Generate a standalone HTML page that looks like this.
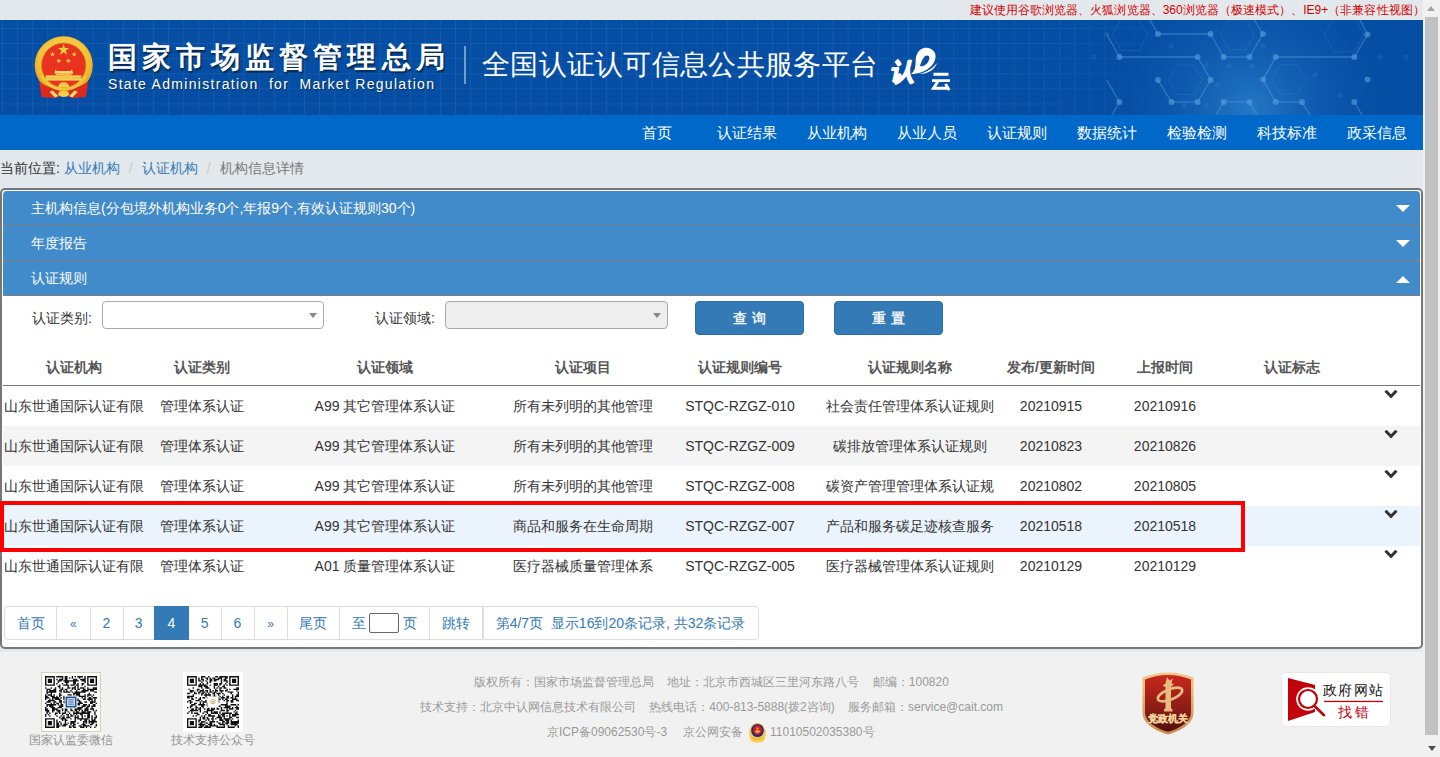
<!DOCTYPE html>
<html><head><meta charset="utf-8">
<style>
*{box-sizing:border-box}
html,body{margin:0;padding:0}
body{width:1440px;height:757px;overflow:hidden;position:relative;background:#e3e8ec;font-family:"Liberation Sans",sans-serif;font-size:14px;color:#333}
.a{position:absolute;white-space:nowrap}
#topbar{left:0;top:0;width:1423px;height:20px;background:#e3e8ec}
#tip{left:970px;top:0;font-size:12px;line-height:20px;color:#d40000;letter-spacing:.04px}
#banner{left:0;top:20px;width:1423px;height:95px;background:#064ea3;overflow:hidden}
#nav{left:0;top:115px;width:1423px;height:35px;background:#0068c9}
#nav .i{position:absolute;top:0;width:90px;text-align:center;color:#fff;font-size:15px;line-height:35px}
#sb{left:1423px;top:0;width:17px;height:757px;background:#f1f1f1}
#thumb{left:1425px;top:17px;width:13px;height:718px;background:#c1c1c1}
#crumb{left:0;top:158px;font-size:14px;line-height:20px;color:#333}
#crumb .l{color:#337ab7}
#crumb .s{color:#ccc;padding:0 9px}
#crumb .c{color:#777}
#panel{left:0;top:188px;width:1423px;height:461px;border:2px solid #777;border-radius:5px;background:#fff}
.acc{position:absolute;left:3px;width:1417px;height:35px;background:#428bca;border-bottom:1px solid #808080;color:#fff;font-size:14px;line-height:34px;padding-left:28px}
.tri{position:absolute;left:1396px;width:0;height:0;border-left:7px solid transparent;border-right:7px solid transparent}
.lbl{font-size:14px;line-height:20px;color:#333}
.sel{position:absolute;height:28px;border:1px solid #aaa;border-radius:4px;background:#fff}
.sel:after{content:"";position:absolute;right:6px;top:11px;border-left:4px solid transparent;border-right:4px solid transparent;border-top:5px solid #888}
.btn{position:absolute;top:301px;width:109px;height:34px;background:#337ab7;border:1px solid #2e6da4;border-radius:4px;color:#fff;text-align:center;font-size:14px;line-height:33px;letter-spacing:5px;padding-left:5px;-webkit-text-stroke:0.35px #fff}
.th{position:absolute;top:357px;font-weight:bold;color:#555;line-height:20px;transform:translateX(-50%)}
.row{position:absolute;left:3px;width:1417px;height:40px}
.td{position:absolute;line-height:20px;color:#333;transform:translateX(-50%)}
.chev{position:absolute;left:1384px}
#pag{left:4px;top:606px;height:34px}
.pg{position:absolute;top:0;height:34px;border:1px solid #ddd;background:#fff;color:#337ab7;line-height:32px;text-align:center;font-size:14px}
#footer{left:0;top:652px;width:1423px;height:105px;background:#f1f1f1}
.ft{position:absolute;font-size:12px;line-height:20px;color:#999}
</style></head><body>
<div id="topbar" class="a"></div>
<div id="tip" class="a">建议使用谷歌浏览器、火狐浏览器、360浏览器（极速模式）、IE9+（非兼容性视图）</div>

<div id="banner" class="a"></div>
<svg class="a" style="left:0;top:20px" width="1423" height="95" viewBox="0 20 1423 95">
<defs><radialGradient id="glow" cx="1250" cy="110" r="150" gradientUnits="userSpaceOnUse"><stop offset="0" stop-color="#2f86d0" stop-opacity="0.75"/><stop offset="0.5" stop-color="#1c6cc0" stop-opacity="0.35"/><stop offset="1" stop-color="#0a4fa3" stop-opacity="0"/></radialGradient>
<pattern id="grid" x="2" y="28" width="15.1" height="15.1" patternUnits="userSpaceOnUse"><path d="M0.5 0V15.1M0 0.5H15.1" stroke="#2f72c4" stroke-opacity="0.33" stroke-width="1" fill="none"/></pattern>
<linearGradient id="gfade" x1="0" y1="0" x2="1423" y2="0" gradientUnits="userSpaceOnUse"><stop offset="0" stop-color="#fff"/><stop offset="0.72" stop-color="#fff"/><stop offset="0.85" stop-color="#fff" stop-opacity="0.15"/><stop offset="1" stop-color="#fff" stop-opacity="0"/></linearGradient><mask id="gm"><rect x="0" y="20" width="1423" height="95" fill="url(#gfade)"/></mask></defs>
<rect x="0" y="20" width="1423" height="95" fill="url(#grid)" mask="url(#gm)"/>
<rect x="900" y="20" width="523" height="95" fill="url(#glow)"/>
<g stroke="#4f98da" stroke-opacity="0.55" stroke-width="1.3" fill="none"><line x1="1157.9" y1="34" x2="1210.6" y2="34"/><line x1="1210.6" y1="34" x2="1223.6" y2="57"/><line x1="1223.6" y1="57" x2="1249.6" y2="57"/><line x1="1249.6" y1="57" x2="1262.9" y2="34"/><line x1="1262.9" y1="34" x2="1254.5" y2="20"/><line x1="1157.9" y1="34" x2="1150" y2="20"/><line x1="1119.4" y1="57" x2="1197.6" y2="57"/><line x1="1197.6" y1="57" x2="1210.6" y2="79.9"/><line x1="1210.6" y1="79.9" x2="1197.6" y2="102"/><line x1="1157.9" y1="79.9" x2="1171.4" y2="102"/><line x1="1171.4" y1="102" x2="1197.6" y2="102"/><line x1="1119.4" y1="57" x2="1106.7" y2="34"/><line x1="1223.6" y1="102" x2="1249.6" y2="102"/><line x1="1223.6" y1="102" x2="1216" y2="115"/><line x1="1249.6" y1="102" x2="1257" y2="115"/><line x1="1275.7" y1="57" x2="1354.3" y2="57"/><line x1="1354.3" y1="57" x2="1367.5" y2="34.5"/><line x1="1367.5" y1="34.5" x2="1360" y2="20"/><line x1="1275.7" y1="57" x2="1263.1" y2="79.4"/><line x1="1263.1" y1="79.4" x2="1275.7" y2="102"/><line x1="1275.7" y1="102" x2="1302" y2="102"/><line x1="1302" y1="102" x2="1310" y2="115"/><line x1="1354.3" y1="102" x2="1362" y2="115"/><line x1="1119.4" y1="102" x2="1106.7" y2="80"/><line x1="1119.4" y1="102" x2="1112" y2="115"/></g>
<g stroke="#3d88d0" stroke-opacity="0.35" stroke-width="0.8" fill="none"><polygon points="1202.4,79.9 1193.9,94.6 1176.9,94.6 1168.4,79.9 1176.9,65.2 1193.9,65.2"/><polygon points="1254.4,34.8 1245.9,49.5 1228.9,49.5 1220.4,34.8 1228.9,20.1 1245.9,20.1"/><polygon points="1148.0,34.8 1139.0,50.4 1121.0,50.4 1112.0,34.8 1121.0,19.2 1139.0,19.2"/><polygon points="1306.0,79.4 1297.5,94.1 1280.5,94.1 1272.0,79.4 1280.5,64.7 1297.5,64.7"/><polygon points="1364.0,34.5 1354.0,51.8 1334.0,51.8 1324.0,34.5 1334.0,17.2 1354.0,17.2"/><polygon points="1253.6,112.0 1245.1,126.7 1228.1,126.7 1219.6,112.0 1228.1,97.3 1245.1,97.3"/></g>
<g fill="#5a9fdc" fill-opacity="0.6"><circle cx="1157.9" cy="34" r="3"/><circle cx="1210.6" cy="34" r="3"/><circle cx="1262.9" cy="34" r="3"/><circle cx="1119.4" cy="57" r="3"/><circle cx="1197.6" cy="57" r="3"/><circle cx="1223.6" cy="57" r="3"/><circle cx="1249.6" cy="57" r="3"/><circle cx="1275.7" cy="57" r="3"/><circle cx="1354.3" cy="57" r="3"/><circle cx="1367.5" cy="34.5" r="3"/><circle cx="1157.9" cy="79.9" r="3"/><circle cx="1210.6" cy="79.9" r="3"/><circle cx="1263.1" cy="79.4" r="3"/><circle cx="1367.5" cy="79.4" r="3"/><circle cx="1119.4" cy="102" r="3"/><circle cx="1171.4" cy="102" r="3"/><circle cx="1197.6" cy="102" r="3"/><circle cx="1223.6" cy="102" r="3"/><circle cx="1249.6" cy="102" r="3"/><circle cx="1275.7" cy="102" r="3"/><circle cx="1302" cy="102" r="3"/><circle cx="1354.3" cy="102" r="3"/></g>
<g fill="#4a90d4" fill-opacity="0.18"><circle cx="1106.7" cy="34" r="2.6"/><circle cx="1093.8" cy="57" r="2.6"/><circle cx="1380" cy="57" r="2.6"/><circle cx="1406" cy="57" r="2.6"/><circle cx="1171.4" cy="46" r="2.6"/><circle cx="1262.9" cy="46" r="2.6"/><circle cx="1229" cy="66" r="2.6"/><circle cx="1252" cy="66" r="2.6"/><circle cx="1217.5" cy="85" r="2.6"/><circle cx="1206" cy="65" r="2.6"/><circle cx="1184" cy="105" r="2.6"/><circle cx="1206" cy="105" r="2.6"/><circle cx="1262.9" cy="85" r="2.6"/><circle cx="1315" cy="75" r="2.6"/><circle cx="1340" cy="95" r="2.6"/></g>
</svg>
<svg class="a" style="left:30px;top:33px" width="68" height="68" viewBox="30 33 68 68">
<defs><radialGradient id="gold" cx="50%" cy="40%" r="60%"><stop offset="0" stop-color="#ffe27a"/><stop offset="0.7" stop-color="#f5c132"/><stop offset="1" stop-color="#e2a21c"/></radialGradient></defs>
<circle cx="63.7" cy="65.2" r="29" fill="url(#gold)"/>
<circle cx="63.7" cy="65.2" r="22.2" fill="#e9321f" stroke="#c98e1a" stroke-width="0.8"/>
<g fill="#f3cf3c">
<polygon points="63.6,43.8 65,48 69.4,48 65.8,50.6 67.2,54.8 63.6,52.2 60,54.8 61.4,50.6 57.8,48 62.2,48"/>
<polygon points="52.5,51.8 53.2,53.6 55.1,53.6 53.6,54.8 54.1,56.6 52.5,55.5 50.9,56.6 51.4,54.8 49.9,53.6 51.8,53.6"/>
<polygon points="74.2,51.8 74.9,53.6 76.8,53.6 75.3,54.8 75.8,56.6 74.2,55.5 72.6,56.6 73.1,54.8 71.6,53.6 73.5,53.6"/>
<polygon points="58.8,58.2 59.5,60 61.4,60 59.9,61.2 60.4,63 58.8,61.9 57.2,63 57.7,61.2 56.2,60 58.1,60"/>
<polygon points="68.3,58.2 69,60 70.9,60 69.4,61.2 69.9,63 68.3,61.9 66.7,63 67.2,61.2 65.7,60 67.6,60"/>
</g>
<path d="M54.3 73.7 L55.5 69.5 L57 71 L70.5 71 L72 69.5 L73.2 73.7Z" fill="#f7d86a"/>
<rect x="56" y="73.7" width="15.5" height="1.6" fill="#eec04a"/>
<rect x="45.8" y="75.3" width="35.6" height="5.3" fill="#f3cf52"/>
<rect x="46.5" y="77.6" width="34.2" height="0.7" fill="#e8b43c"/>
<path d="M39.5 81 C44 85.5 52 89 63.7 89.8 C75.4 89 83.4 85.5 87.9 81 C88 86 86.5 91 86 97 C81 96.5 76 98.5 71 97.8 L63.7 94.5 L56.4 97.8 C51.4 98.5 46.4 96.5 41.4 97 C41 91 39.5 86 39.5 81Z" fill="#e0291d"/>
<path d="M41.5 76 C47 85 55 89.5 63.7 89.5 C72.4 89.5 80.4 85 85.9 76" fill="none" stroke="#f3c43c" stroke-width="2.6"/>
<path d="M58 87.5 C58.5 83.5 61 82.2 63.7 82.2 C66.4 82.2 68.9 83.5 69.4 87.5Z" fill="#f3c947"/>
<ellipse cx="63.7" cy="93.8" rx="5.6" ry="3.2" fill="#f5cf4e"/>
<path d="M49.5 91.8 L52.8 90.6 L58.2 96 L55 97.6Z" fill="#f7dc7a"/>
<path d="M77.9 91.8 L74.6 90.6 L69.2 96 L72.4 97.6Z" fill="#f7dc7a"/>
</svg>
<div class="a" style="left:108px;top:37px;font-size:29px;line-height:40px;font-weight:900;letter-spacing:5.2px;color:#fff;text-shadow:1px 2px 2px rgba(0,0,0,.55)">国家市场监督管理总局</div>
<div class="a" style="left:108px;top:74px;font-size:14px;line-height:20px;letter-spacing:1.3px;color:#fff;text-shadow:1px 1px 1px rgba(0,0,0,.45)">State Administration&nbsp;&nbsp;for&nbsp;&nbsp;Market Regulation</div>
<div class="a" style="left:464px;top:46px;width:2px;height:38px;background:rgba(200,220,245,.55)"></div>
<div class="a" style="left:482px;top:45px;font-size:28px;line-height:40px;letter-spacing:0.3px;color:#fff">全国认证认可信息公共服务平台</div>
<svg class="a" style="left:886px;top:44px" width="70" height="50" viewBox="0 0 70 50">
<text x="4" y="36.5" font-size="24" font-weight="900" fill="#fff" stroke="#fff" stroke-width="1.6" stroke-linejoin="round" font-family="Liberation Sans,sans-serif" transform="skewX(-12) translate(8 0)">认</text>
<path fill-rule="evenodd" d="M25 30 C31 26 29 18 30 13 C32 5 38 3 42 4 C48 5 51 10 49 16 C47 22 41 26 36 28 C32 29.5 28 30 25 30Z M34 22 C36 16 38 11.5 41 11.5 C44 11.5 44 15 42 18 C40 21 37 23 34 22Z" fill="#fff"/>
<path d="M33 30 C41 28 47 24 51 19 C49 25 43 30 33 30Z" fill="#fff"/>
<path d="M47.5 30.2h15M46 36.6h18M51.8 37.5L47.5 44.3h15M59.5 40L63.2 46" fill="none" stroke="#fff" stroke-width="2.9"/>
</svg>

<div id="nav" class="a">
<div class="i" style="left:612px">首页</div>
<div class="i" style="left:702px">认证结果</div>
<div class="i" style="left:792px">从业机构</div>
<div class="i" style="left:882px">从业人员</div>
<div class="i" style="left:972px">认证规则</div>
<div class="i" style="left:1062px">数据统计</div>
<div class="i" style="left:1152px">检验检测</div>
<div class="i" style="left:1242px">科技标准</div>
<div class="i" style="left:1332px">政采信息</div>
</div>

<div id="crumb" class="a">当前位置: <span class="l">从业机构</span><span class="s">/</span><span class="l">认证机构</span><span class="s">/</span><span class="c">机构信息详情</span></div>

<div id="panel" class="a"></div>
<div class="acc" style="top:191px;border-radius:4px 4px 0 0">主机构信息(分包境外机构业务0个,年报9个,有效认证规则30个)</div>
<div class="tri" style="top:205px;border-top:7px solid #fff"></div>
<div class="acc" style="top:226px">年度报告</div>
<div class="tri" style="top:240px;border-top:7px solid #fff"></div>
<div class="acc" style="top:261px">认证规则</div>
<div class="tri" style="top:276px;border-bottom:7px solid #fff"></div>

<div class="a lbl" style="left:32px;top:308px">认证类别:</div>
<div class="sel" style="left:102px;top:301px;width:222px"></div>
<div class="a lbl" style="left:375px;top:308px">认证领域:</div>
<div class="sel" style="left:445px;top:301px;width:223px;background:#eee"></div>
<div class="btn" style="left:695px">查询</div>
<div class="btn" style="left:834px">重置</div>

<div class="th" style="left:73.5px">认证机构</div>
<div class="th" style="left:201.5px">认证类别</div>
<div class="th" style="left:385px">认证领域</div>
<div class="th" style="left:583px">认证项目</div>
<div class="th" style="left:740px">认证规则编号</div>
<div class="th" style="left:910px">认证规则名称</div>
<div class="th" style="left:1051px">发布/更新时间</div>
<div class="th" style="left:1165px">上报时间</div>
<div class="th" style="left:1292px">认证标志</div>
<div class="a" style="left:3px;top:385px;width:1417px;height:1px;background:#777"></div>
<div class="row" style="top:386px;background:#fff"></div>
<div class="td" style="left:73.5px;top:396px">山东世通国际认证有限</div>
<div class="td" style="left:201.5px;top:396px">管理体系认证</div>
<div class="td" style="left:385px;top:396px">A99 其它管理体系认证</div>
<div class="td" style="left:583px;top:396px">所有未列明的其他管理</div>
<div class="td" style="left:740px;top:396px">STQC-RZGZ-010</div>
<div class="td" style="left:910px;top:396px">社会责任管理体系认证规则</div>
<div class="td" style="left:1051px;top:396px">20210915</div>
<div class="td" style="left:1165px;top:396px">20210916</div>
<svg class="chev" style="top:389px" width="14" height="10" viewBox="0 0 14 10"><path d="M1.5 1.8 L7 7.3 L12.5 1.8" fill="none" stroke="#333" stroke-width="3"/></svg>
<div class="row" style="top:426px;background:#f4f4f4"></div>
<div class="td" style="left:73.5px;top:436px">山东世通国际认证有限</div>
<div class="td" style="left:201.5px;top:436px">管理体系认证</div>
<div class="td" style="left:385px;top:436px">A99 其它管理体系认证</div>
<div class="td" style="left:583px;top:436px">所有未列明的其他管理</div>
<div class="td" style="left:740px;top:436px">STQC-RZGZ-009</div>
<div class="td" style="left:910px;top:436px">碳排放管理体系认证规则</div>
<div class="td" style="left:1051px;top:436px">20210823</div>
<div class="td" style="left:1165px;top:436px">20210826</div>
<svg class="chev" style="top:429px" width="14" height="10" viewBox="0 0 14 10"><path d="M1.5 1.8 L7 7.3 L12.5 1.8" fill="none" stroke="#333" stroke-width="3"/></svg>
<div class="row" style="top:466px;background:#fff"></div>
<div class="td" style="left:73.5px;top:476px">山东世通国际认证有限</div>
<div class="td" style="left:201.5px;top:476px">管理体系认证</div>
<div class="td" style="left:385px;top:476px">A99 其它管理体系认证</div>
<div class="td" style="left:583px;top:476px">所有未列明的其他管理</div>
<div class="td" style="left:740px;top:476px">STQC-RZGZ-008</div>
<div class="td" style="left:910px;top:476px">碳资产管理管理体系认证规</div>
<div class="td" style="left:1051px;top:476px">20210802</div>
<div class="td" style="left:1165px;top:476px">20210805</div>
<svg class="chev" style="top:469px" width="14" height="10" viewBox="0 0 14 10"><path d="M1.5 1.8 L7 7.3 L12.5 1.8" fill="none" stroke="#333" stroke-width="3"/></svg>
<div class="row" style="top:506px;background:#ebf3fc"></div>
<div class="td" style="left:73.5px;top:516px">山东世通国际认证有限</div>
<div class="td" style="left:201.5px;top:516px">管理体系认证</div>
<div class="td" style="left:385px;top:516px">A99 其它管理体系认证</div>
<div class="td" style="left:583px;top:516px">商品和服务在生命周期</div>
<div class="td" style="left:740px;top:516px">STQC-RZGZ-007</div>
<div class="td" style="left:910px;top:516px">产品和服务碳足迹核查服务</div>
<div class="td" style="left:1051px;top:516px">20210518</div>
<div class="td" style="left:1165px;top:516px">20210518</div>
<svg class="chev" style="top:509px" width="14" height="10" viewBox="0 0 14 10"><path d="M1.5 1.8 L7 7.3 L12.5 1.8" fill="none" stroke="#333" stroke-width="3"/></svg>
<div class="row" style="top:546px;background:#fff"></div>
<div class="td" style="left:73.5px;top:556px">山东世通国际认证有限</div>
<div class="td" style="left:201.5px;top:556px">管理体系认证</div>
<div class="td" style="left:385px;top:556px">A01 质量管理体系认证</div>
<div class="td" style="left:583px;top:556px">医疗器械质量管理体系</div>
<div class="td" style="left:740px;top:556px">STQC-RZGZ-005</div>
<div class="td" style="left:910px;top:556px">医疗器械管理体系认证规则</div>
<div class="td" style="left:1051px;top:556px">20210129</div>
<div class="td" style="left:1165px;top:556px">20210129</div>
<svg class="chev" style="top:549px" width="14" height="10" viewBox="0 0 14 10"><path d="M1.5 1.8 L7 7.3 L12.5 1.8" fill="none" stroke="#333" stroke-width="3"/></svg>
<div class="a" style="left:0;top:501px;width:1245px;height:51px;border:4px solid #f00"></div>
<div class="pg" style="left:4px;top:606px;width:53px;border-radius:4px 0 0 4px;">首页</div>
<div class="pg" style="left:56px;top:606px;width:34.5px;"><span style="font-size:12px">«</span></div>
<div class="pg" style="left:89.5px;top:606px;width:34.0px;">2</div>
<div class="pg" style="left:122.5px;top:606px;width:32.5px;">3</div>
<div class="pg" style="left:154px;top:606px;width:35px;background:#337ab7;border-color:#337ab7;color:#fff;z-index:2;">4</div>
<div class="pg" style="left:188px;top:606px;width:33.5px;">5</div>
<div class="pg" style="left:220.5px;top:606px;width:34.0px;">6</div>
<div class="pg" style="left:253.5px;top:606px;width:34.0px;"><span style="font-size:12px">»</span></div>
<div class="pg" style="left:286.5px;top:606px;width:53.89999999999998px;">尾页</div>
<div class="pg" style="left:339.4px;top:606px;width:91.0px;"></div>
<div class="pg" style="left:429.4px;top:606px;width:54.10000000000002px;">跳转</div>
<div class="pg" style="left:482.5px;top:606px;width:276.0px;border-radius:0 4px 4px 0;">第4/7页&nbsp;&nbsp;显示16到20条记录, 共32条记录</div>
<div class="a" style="left:352px;top:613px;color:#337ab7;line-height:20px">至</div>
<div class="a" style="left:369px;top:613px;width:30px;height:20px;border:1px solid #666;border-radius:2px;background:#fff"></div>
<div class="a" style="left:403px;top:613px;color:#337ab7;line-height:20px">页</div>

<div id="footer" class="a"></div>
<div class="a" style="left:41px;top:672px;width:60px;height:60px;background:#fff;border:1px solid #d6cfb4"></div>
<svg class="a" style="left:45px;top:676px" width="52" height="52" viewBox="0 0 37 37"><path d="M0 0h7v1h-7zM8 0h5v1h-5zM14 0h2v1h-2zM19 0h1v1h-1zM21 0h1v1h-1zM23 0h4v1h-4zM28 0h1v1h-1zM30 0h7v1h-7zM0 1h1v1h-1zM6 1h1v1h-1zM12 1h1v1h-1zM14 1h2v1h-2zM17 1h1v1h-1zM19 1h1v1h-1zM24 1h1v1h-1zM28 1h1v1h-1zM30 1h1v1h-1zM36 1h1v1h-1zM0 2h1v1h-1zM2 2h3v1h-3zM6 2h1v1h-1zM8 2h1v1h-1zM10 2h3v1h-3zM14 2h2v1h-2zM20 2h3v1h-3zM25 2h4v1h-4zM30 2h1v1h-1zM32 2h3v1h-3zM36 2h1v1h-1zM0 3h1v1h-1zM2 3h3v1h-3zM6 3h1v1h-1zM9 3h3v1h-3zM13 3h11v1h-11zM26 3h3v1h-3zM30 3h1v1h-1zM32 3h3v1h-3zM36 3h1v1h-1zM0 4h1v1h-1zM2 4h3v1h-3zM6 4h1v1h-1zM9 4h1v1h-1zM14 4h3v1h-3zM20 4h2v1h-2zM28 4h1v1h-1zM30 4h1v1h-1zM32 4h3v1h-3zM36 4h1v1h-1zM0 5h1v1h-1zM6 5h1v1h-1zM8 5h1v1h-1zM12 5h1v1h-1zM15 5h1v1h-1zM20 5h2v1h-2zM23 5h1v1h-1zM26 5h2v1h-2zM30 5h1v1h-1zM36 5h1v1h-1zM0 6h7v1h-7zM10 6h1v1h-1zM13 6h4v1h-4zM18 6h3v1h-3zM22 6h2v1h-2zM26 6h1v1h-1zM30 6h7v1h-7zM9 7h2v1h-2zM16 7h1v1h-1zM21 7h1v1h-1zM23 7h1v1h-1zM28 7h1v1h-1zM0 8h1v1h-1zM4 8h1v1h-1zM7 8h1v1h-1zM10 8h1v1h-1zM12 8h1v1h-1zM16 8h2v1h-2zM19 8h3v1h-3zM23 8h1v1h-1zM25 8h3v1h-3zM30 8h1v1h-1zM34 8h3v1h-3zM1 9h3v1h-3zM6 9h2v1h-2zM11 9h2v1h-2zM14 9h2v1h-2zM19 9h1v1h-1zM21 9h1v1h-1zM23 9h2v1h-2zM27 9h2v1h-2zM30 9h7v1h-7zM1 10h1v1h-1zM3 10h5v1h-5zM10 10h2v1h-2zM13 10h1v1h-1zM15 10h1v1h-1zM18 10h1v1h-1zM22 10h1v1h-1zM26 10h5v1h-5zM32 10h3v1h-3zM1 11h7v1h-7zM11 11h1v1h-1zM13 11h5v1h-5zM19 11h1v1h-1zM21 11h8v1h-8zM35 11h2v1h-2zM1 12h1v1h-1zM4 12h1v1h-1zM10 12h1v1h-1zM20 12h5v1h-5zM31 12h1v1h-1zM0 13h1v1h-1zM2 13h3v1h-3zM6 13h1v1h-1zM10 13h2v1h-2zM16 13h3v1h-3zM20 13h1v1h-1zM22 13h3v1h-3zM28 13h1v1h-1zM30 13h3v1h-3zM34 13h1v1h-1zM0 14h2v1h-2zM4 14h3v1h-3zM8 14h1v1h-1zM10 14h1v1h-1zM13 14h1v1h-1zM18 14h1v1h-1zM21 14h2v1h-2zM24 14h5v1h-5zM30 14h1v1h-1zM33 14h1v1h-1zM0 15h3v1h-3zM5 15h5v1h-5zM11 15h1v1h-1zM13 15h2v1h-2zM16 15h2v1h-2zM26 15h1v1h-1zM28 15h1v1h-1zM31 15h2v1h-2zM34 15h3v1h-3zM0 16h1v1h-1zM3 16h1v1h-1zM5 16h1v1h-1zM7 16h4v1h-4zM13 16h1v1h-1zM16 16h8v1h-8zM27 16h2v1h-2zM30 16h4v1h-4zM35 16h1v1h-1zM2 17h5v1h-5zM10 17h2v1h-2zM14 17h1v1h-1zM16 17h2v1h-2zM22 17h3v1h-3zM31 17h1v1h-1zM33 17h1v1h-1zM35 17h1v1h-1zM1 18h3v1h-3zM6 18h2v1h-2zM10 18h2v1h-2zM13 18h3v1h-3zM19 18h3v1h-3zM24 18h2v1h-2zM28 18h2v1h-2zM32 18h4v1h-4zM0 19h1v1h-1zM4 19h1v1h-1zM6 19h1v1h-1zM8 19h2v1h-2zM11 19h1v1h-1zM14 19h3v1h-3zM19 19h3v1h-3zM23 19h4v1h-4zM32 19h2v1h-2zM36 19h1v1h-1zM1 20h7v1h-7zM9 20h1v1h-1zM11 20h2v1h-2zM15 20h4v1h-4zM20 20h2v1h-2zM23 20h2v1h-2zM27 20h3v1h-3zM31 20h1v1h-1zM34 20h2v1h-2zM1 21h1v1h-1zM3 21h3v1h-3zM10 21h3v1h-3zM15 21h3v1h-3zM20 21h1v1h-1zM26 21h3v1h-3zM30 21h2v1h-2zM33 21h3v1h-3zM0 22h1v1h-1zM4 22h3v1h-3zM9 22h3v1h-3zM17 22h1v1h-1zM19 22h1v1h-1zM21 22h1v1h-1zM23 22h4v1h-4zM29 22h2v1h-2zM33 22h1v1h-1zM0 23h2v1h-2zM5 23h4v1h-4zM12 23h1v1h-1zM14 23h2v1h-2zM18 23h1v1h-1zM21 23h5v1h-5zM28 23h3v1h-3zM32 23h3v1h-3zM0 24h3v1h-3zM5 24h2v1h-2zM8 24h3v1h-3zM12 24h1v1h-1zM14 24h2v1h-2zM18 24h2v1h-2zM21 24h2v1h-2zM24 24h1v1h-1zM26 24h1v1h-1zM28 24h3v1h-3zM34 24h1v1h-1zM36 24h1v1h-1zM1 25h2v1h-2zM5 25h1v1h-1zM9 25h2v1h-2zM14 25h1v1h-1zM16 25h1v1h-1zM20 25h1v1h-1zM22 25h2v1h-2zM26 25h3v1h-3zM30 25h3v1h-3zM35 25h1v1h-1zM1 26h1v1h-1zM3 26h1v1h-1zM7 26h2v1h-2zM10 26h1v1h-1zM12 26h3v1h-3zM17 26h1v1h-1zM20 26h12v1h-12zM35 26h1v1h-1zM0 27h1v1h-1zM2 27h1v1h-1zM7 27h1v1h-1zM12 27h1v1h-1zM15 27h2v1h-2zM18 27h1v1h-1zM20 27h1v1h-1zM22 27h1v1h-1zM25 27h2v1h-2zM30 27h2v1h-2zM35 27h1v1h-1zM0 28h1v1h-1zM3 28h1v1h-1zM8 28h1v1h-1zM11 28h1v1h-1zM13 28h1v1h-1zM16 28h1v1h-1zM18 28h2v1h-2zM21 28h1v1h-1zM23 28h1v1h-1zM26 28h1v1h-1zM28 28h1v1h-1zM30 28h2v1h-2zM33 28h1v1h-1zM36 28h1v1h-1zM10 29h1v1h-1zM12 29h2v1h-2zM15 29h3v1h-3zM21 29h3v1h-3zM26 29h1v1h-1zM30 29h2v1h-2zM33 29h1v1h-1zM35 29h2v1h-2zM0 30h7v1h-7zM11 30h4v1h-4zM18 30h1v1h-1zM21 30h1v1h-1zM23 30h8v1h-8zM33 30h1v1h-1zM35 30h1v1h-1zM0 31h1v1h-1zM6 31h1v1h-1zM8 31h1v1h-1zM12 31h1v1h-1zM14 31h2v1h-2zM21 31h1v1h-1zM25 31h1v1h-1zM28 31h2v1h-2zM31 31h1v1h-1zM33 31h3v1h-3zM0 32h1v1h-1zM2 32h3v1h-3zM6 32h1v1h-1zM8 32h1v1h-1zM10 32h1v1h-1zM14 32h1v1h-1zM18 32h4v1h-4zM27 32h3v1h-3zM31 32h6v1h-6zM0 33h1v1h-1zM2 33h3v1h-3zM6 33h1v1h-1zM8 33h2v1h-2zM11 33h1v1h-1zM14 33h1v1h-1zM16 33h1v1h-1zM18 33h3v1h-3zM23 33h1v1h-1zM27 33h1v1h-1zM29 33h1v1h-1zM31 33h1v1h-1zM33 33h2v1h-2zM0 34h1v1h-1zM2 34h3v1h-3zM6 34h1v1h-1zM8 34h2v1h-2zM11 34h1v1h-1zM13 34h3v1h-3zM18 34h1v1h-1zM20 34h2v1h-2zM26 34h3v1h-3zM32 34h2v1h-2zM36 34h1v1h-1zM0 35h1v1h-1zM6 35h1v1h-1zM8 35h3v1h-3zM12 35h3v1h-3zM17 35h1v1h-1zM19 35h2v1h-2zM24 35h2v1h-2zM27 35h5v1h-5zM36 35h1v1h-1zM0 36h7v1h-7zM8 36h2v1h-2zM17 36h2v1h-2zM20 36h2v1h-2zM25 36h3v1h-3zM29 36h1v1h-1zM32 36h1v1h-1zM35 36h1v1h-1z" fill="#111"/><rect x="14" y="14" width="9" height="9" fill="#fff"/><rect x="14.6" y="14.6" width="7.8" height="7.8" fill="#1d559b"/><rect x="15.8" y="15.8" width="5.4" height="5.4" fill="#f4f6fa"/><path d="M16.5 17h4M16.5 18.5h4M16.5 20h4" stroke="#1d559b" stroke-width="0.7"/></svg>
<div class="ft" style="left:29px;top:730px;color:#919191">国家认监委微信</div>
<div class="a" style="left:183px;top:672px;width:60px;height:60px;background:#fff"></div>
<svg class="a" style="left:187px;top:676px" width="52" height="52" viewBox="0 0 37 37"><path d="M0 0h7v1h-7zM10 0h3v1h-3zM15 0h1v1h-1zM20 0h2v1h-2zM23 0h6v1h-6zM30 0h7v1h-7zM0 1h1v1h-1zM6 1h1v1h-1zM8 1h1v1h-1zM10 1h1v1h-1zM13 1h2v1h-2zM16 1h1v1h-1zM18 1h2v1h-2zM22 1h3v1h-3zM27 1h2v1h-2zM30 1h1v1h-1zM36 1h1v1h-1zM0 2h1v1h-1zM2 2h3v1h-3zM6 2h1v1h-1zM8 2h1v1h-1zM10 2h2v1h-2zM14 2h1v1h-1zM16 2h2v1h-2zM19 2h4v1h-4zM24 2h1v1h-1zM26 2h2v1h-2zM30 2h1v1h-1zM32 2h3v1h-3zM36 2h1v1h-1zM0 3h1v1h-1zM2 3h3v1h-3zM6 3h1v1h-1zM8 3h2v1h-2zM11 3h1v1h-1zM13 3h1v1h-1zM16 3h2v1h-2zM19 3h2v1h-2zM24 3h1v1h-1zM26 3h3v1h-3zM30 3h1v1h-1zM32 3h3v1h-3zM36 3h1v1h-1zM0 4h1v1h-1zM2 4h3v1h-3zM6 4h1v1h-1zM10 4h1v1h-1zM14 4h1v1h-1zM16 4h1v1h-1zM24 4h1v1h-1zM28 4h1v1h-1zM30 4h1v1h-1zM32 4h3v1h-3zM36 4h1v1h-1zM0 5h1v1h-1zM6 5h1v1h-1zM9 5h1v1h-1zM11 5h1v1h-1zM14 5h1v1h-1zM19 5h3v1h-3zM23 5h2v1h-2zM27 5h1v1h-1zM30 5h1v1h-1zM36 5h1v1h-1zM0 6h7v1h-7zM8 6h6v1h-6zM16 6h1v1h-1zM19 6h3v1h-3zM23 6h1v1h-1zM26 6h1v1h-1zM28 6h1v1h-1zM30 6h7v1h-7zM8 7h3v1h-3zM12 7h3v1h-3zM19 7h1v1h-1zM22 7h1v1h-1zM25 7h2v1h-2zM4 8h1v1h-1zM10 8h1v1h-1zM13 8h3v1h-3zM19 8h1v1h-1zM21 8h1v1h-1zM23 8h2v1h-2zM26 8h2v1h-2zM35 8h2v1h-2zM1 9h1v1h-1zM7 9h2v1h-2zM11 9h1v1h-1zM16 9h1v1h-1zM20 9h1v1h-1zM23 9h1v1h-1zM28 9h1v1h-1zM30 9h1v1h-1zM33 9h4v1h-4zM2 10h3v1h-3zM7 10h1v1h-1zM9 10h3v1h-3zM13 10h2v1h-2zM16 10h1v1h-1zM18 10h1v1h-1zM20 10h2v1h-2zM23 10h3v1h-3zM27 10h2v1h-2zM35 10h1v1h-1zM2 11h2v1h-2zM5 11h1v1h-1zM8 11h2v1h-2zM11 11h2v1h-2zM14 11h1v1h-1zM16 11h2v1h-2zM19 11h2v1h-2zM24 11h1v1h-1zM29 11h4v1h-4zM36 11h1v1h-1zM0 12h2v1h-2zM5 12h2v1h-2zM8 12h1v1h-1zM10 12h2v1h-2zM13 12h1v1h-1zM15 12h1v1h-1zM18 12h2v1h-2zM21 12h3v1h-3zM25 12h1v1h-1zM31 12h1v1h-1zM36 12h1v1h-1zM4 13h1v1h-1zM10 13h1v1h-1zM12 13h5v1h-5zM19 13h1v1h-1zM22 13h1v1h-1zM26 13h1v1h-1zM32 13h1v1h-1zM35 13h2v1h-2zM0 14h5v1h-5zM13 14h1v1h-1zM16 14h1v1h-1zM18 14h3v1h-3zM23 14h1v1h-1zM25 14h1v1h-1zM28 14h2v1h-2zM32 14h1v1h-1zM34 14h3v1h-3zM0 15h2v1h-2zM3 15h1v1h-1zM6 15h1v1h-1zM9 15h1v1h-1zM11 15h2v1h-2zM14 15h1v1h-1zM18 15h1v1h-1zM22 15h1v1h-1zM24 15h3v1h-3zM28 15h2v1h-2zM31 15h2v1h-2zM34 15h1v1h-1zM3 16h2v1h-2zM8 16h2v1h-2zM15 16h2v1h-2zM20 16h4v1h-4zM25 16h1v1h-1zM27 16h2v1h-2zM32 16h4v1h-4zM1 17h2v1h-2zM6 17h3v1h-3zM10 17h1v1h-1zM13 17h1v1h-1zM17 17h3v1h-3zM21 17h2v1h-2zM26 17h1v1h-1zM28 17h2v1h-2zM31 17h2v1h-2zM35 17h2v1h-2zM0 18h1v1h-1zM2 18h2v1h-2zM9 18h1v1h-1zM11 18h3v1h-3zM16 18h7v1h-7zM28 18h1v1h-1zM31 18h2v1h-2zM2 19h1v1h-1zM5 19h2v1h-2zM9 19h1v1h-1zM11 19h1v1h-1zM14 19h2v1h-2zM19 19h2v1h-2zM28 19h1v1h-1zM3 20h3v1h-3zM8 20h5v1h-5zM14 20h3v1h-3zM19 20h3v1h-3zM24 20h5v1h-5zM31 20h4v1h-4zM36 20h1v1h-1zM2 21h2v1h-2zM6 21h1v1h-1zM10 21h2v1h-2zM14 21h1v1h-1zM17 21h1v1h-1zM20 21h4v1h-4zM27 21h4v1h-4zM35 21h1v1h-1zM0 22h1v1h-1zM2 22h1v1h-1zM6 22h2v1h-2zM9 22h1v1h-1zM11 22h1v1h-1zM15 22h1v1h-1zM17 22h1v1h-1zM19 22h1v1h-1zM21 22h1v1h-1zM24 22h1v1h-1zM26 22h5v1h-5zM32 22h1v1h-1zM34 22h3v1h-3zM3 23h2v1h-2zM6 23h1v1h-1zM8 23h2v1h-2zM12 23h1v1h-1zM14 23h2v1h-2zM17 23h3v1h-3zM21 23h2v1h-2zM24 23h1v1h-1zM28 23h1v1h-1zM30 23h3v1h-3zM35 23h2v1h-2zM2 24h6v1h-6zM9 24h1v1h-1zM14 24h5v1h-5zM24 24h3v1h-3zM28 24h2v1h-2zM34 24h1v1h-1zM1 25h1v1h-1zM3 25h1v1h-1zM9 25h1v1h-1zM12 25h3v1h-3zM17 25h1v1h-1zM19 25h3v1h-3zM23 25h1v1h-1zM28 25h1v1h-1zM33 25h1v1h-1zM35 25h1v1h-1zM0 26h1v1h-1zM3 26h1v1h-1zM5 26h3v1h-3zM11 26h1v1h-1zM14 26h1v1h-1zM17 26h5v1h-5zM23 26h1v1h-1zM25 26h7v1h-7zM34 26h2v1h-2zM7 27h2v1h-2zM13 27h1v1h-1zM15 27h2v1h-2zM22 27h1v1h-1zM24 27h3v1h-3zM30 27h1v1h-1zM32 27h5v1h-5zM4 28h1v1h-1zM6 28h1v1h-1zM10 28h1v1h-1zM12 28h1v1h-1zM15 28h5v1h-5zM22 28h2v1h-2zM25 28h2v1h-2zM28 28h1v1h-1zM30 28h1v1h-1zM32 28h3v1h-3zM9 29h1v1h-1zM11 29h2v1h-2zM14 29h1v1h-1zM18 29h1v1h-1zM21 29h4v1h-4zM26 29h1v1h-1zM30 29h2v1h-2zM35 29h2v1h-2zM0 30h7v1h-7zM9 30h1v1h-1zM11 30h2v1h-2zM14 30h2v1h-2zM17 30h2v1h-2zM20 30h1v1h-1zM23 30h2v1h-2zM26 30h5v1h-5zM32 30h1v1h-1zM0 31h1v1h-1zM6 31h1v1h-1zM8 31h2v1h-2zM13 31h1v1h-1zM15 31h1v1h-1zM18 31h1v1h-1zM23 31h3v1h-3zM27 31h3v1h-3zM31 31h1v1h-1zM36 31h1v1h-1zM0 32h1v1h-1zM2 32h3v1h-3zM6 32h1v1h-1zM8 32h1v1h-1zM10 32h3v1h-3zM16 32h4v1h-4zM21 32h1v1h-1zM25 32h2v1h-2zM28 32h2v1h-2zM31 32h6v1h-6zM0 33h1v1h-1zM2 33h3v1h-3zM6 33h1v1h-1zM9 33h2v1h-2zM13 33h2v1h-2zM16 33h2v1h-2zM22 33h2v1h-2zM25 33h1v1h-1zM27 33h3v1h-3zM31 33h6v1h-6zM0 34h1v1h-1zM2 34h3v1h-3zM6 34h1v1h-1zM8 34h5v1h-5zM15 34h3v1h-3zM19 34h1v1h-1zM23 34h4v1h-4zM28 34h1v1h-1zM31 34h5v1h-5zM0 35h1v1h-1zM6 35h1v1h-1zM9 35h3v1h-3zM13 35h2v1h-2zM16 35h6v1h-6zM26 35h1v1h-1zM29 35h1v1h-1zM34 35h1v1h-1zM36 35h1v1h-1zM0 36h7v1h-7zM8 36h3v1h-3zM12 36h5v1h-5zM21 36h6v1h-6zM29 36h5v1h-5zM36 36h1v1h-1z" fill="#111"/><rect x="14.5" y="14.5" width="8" height="8" fill="#fff"/><circle cx="18.5" cy="18.2" r="1.6" fill="none" stroke="#e9a33a" stroke-width="0.7"/><circle cx="18.5" cy="18.2" r="0.6" fill="#3a9ad9"/></svg>
<div class="ft" style="left:171px;top:730px;color:#919191">技术支持公众号</div>
<div class="ft" style="left:0;width:1423px;text-align:center;top:672px">版权所有：国家市场监督管理总局&nbsp;&nbsp;&nbsp;&nbsp;地址：北京市西城区三里河东路八号&nbsp;&nbsp;&nbsp;&nbsp;邮编：100820</div>
<div class="ft" style="left:0;width:1423px;text-align:center;top:697px">技术支持：北京中认网信息技术有限公司&nbsp;&nbsp;&nbsp;&nbsp;热线电话：400-813-5888(拨2咨询)&nbsp;&nbsp;&nbsp;&nbsp;服务邮箱：service@cait.com</div>
<div class="ft" style="left:547px;top:722px">京ICP备09062530号-3</div>
<div class="ft" style="left:683px;top:722px">京公网安备</div>
<div class="ft" style="left:770px;top:722px">11010502035380号</div>
<svg class="a" style="left:748px;top:722px" width="19" height="22" viewBox="0 0 19 22">
<defs><linearGradient id="pg1" x1="0" y1="0" x2="0" y2="1"><stop offset="0" stop-color="#f0b93c"/><stop offset="1" stop-color="#f7d34e"/></linearGradient></defs>
<path d="M9.5 1 C5 1.5 2 4.5 1.5 9 C1 13 1.5 17 4 19.5 C6 21 13 21 15 19.5 C17.5 17 18 13 17.5 9 C17 4.5 14 1.5 9.5 1Z" fill="url(#pg1)"/>
<ellipse cx="9.5" cy="8.5" rx="6.3" ry="6.6" fill="#1b2a8a"/>
<ellipse cx="9.5" cy="8.2" rx="4.4" ry="4.9" fill="#dc1c1c"/>
<ellipse cx="9.5" cy="9.6" rx="2.4" ry="1.4" fill="#f2c343"/>
<circle cx="9.5" cy="6.5" r="1.1" fill="#f2c343"/>
<path d="M4 15.5 C6.5 17.5 12.5 17.5 15 15.5" stroke="#e9a938" stroke-width="1" fill="none"/>
</svg>

<svg class="a" style="left:1141px;top:671px" width="54" height="65" viewBox="0 0 54 65">
<defs>
<linearGradient id="shg" x1="0" y1="0" x2="0" y2="1"><stop offset="0" stop-color="#c9281c"/><stop offset="0.6" stop-color="#8a1c16"/><stop offset="1" stop-color="#4e0f0c"/></linearGradient>
<linearGradient id="shb" x1="0" y1="0" x2="0" y2="1"><stop offset="0" stop-color="#f3c889"/><stop offset="1" stop-color="#c98a45"/></linearGradient>
</defs>
<path d="M27 1.5 C18 1.5 9 3.5 1.5 6.5 L1.5 42 C1.5 52 14 60 27 63.5 C40 60 52.5 52 52.5 42 L52.5 6.5 C45 3.5 36 1.5 27 1.5Z" fill="url(#shb)"/>
<path d="M27 4 C18.5 4 10.5 5.8 4 8.5 L4 41.5 C4 50.5 15 57.5 27 60.8 C39 57.5 50 50.5 50 41.5 L50 8.5 C43.5 5.8 35.5 4 27 4Z" fill="url(#shg)"/>
<path d="M26 6 L28.5 9.5 L32 7.5 L30.5 12 L33 13.5 L30 15.5 L30 37 L31.5 38.5 L31.5 40.5 L23 40.5 L23 38.5 L24.5 37 L24.5 16 L21.5 14.5 L24.5 12.5Z" fill="#e9bb7e"/>
<ellipse cx="29" cy="23.5" rx="13" ry="5.2" transform="rotate(-22 29 23.5)" fill="none" stroke="#e9bb7e" stroke-width="2.6"/>
<text x="27" y="51" text-anchor="middle" font-size="9.5" font-weight="900" fill="#f3d29c" stroke="#f3d29c" stroke-width="0.3" font-family="Liberation Sans,sans-serif">党政机关</text>
</svg>

<div class="a" style="left:1281px;top:672px;width:110px;height:55px;background:#fff;border:1px solid #e8e8e8;border-radius:5px"></div>
<svg class="a" style="left:1281px;top:672px" width="110" height="55" viewBox="0 0 110 55">
<path d="M7 6 L34 13 L34 40 L7 49Z" fill="#c4000a"/>
<circle cx="27" cy="27" r="11.8" fill="#fff"/>
<circle cx="27" cy="27" r="9" fill="none" stroke="#c4000a" stroke-width="2.2"/>
<path d="M33.5 34 L41.5 42" stroke="#fff" stroke-width="4.5"/>
<path d="M33.5 34 L43 43.2" stroke="#c4000a" stroke-width="2.6" stroke-linecap="round"/>
<rect x="43" y="28.8" width="59" height="1.3" fill="#c4000a"/>
</svg>
<div class="a" style="left:1323px;top:680px;font-size:14px;line-height:20px;color:#111;letter-spacing:1.3px">政府网站</div>
<div class="a" style="left:1338px;top:702px;font-size:14px;line-height:20px;color:#c4000a;letter-spacing:3px">找错</div>

<div id="sb" class="a"></div>
<div id="thumb" class="a"></div>
<div class="a" style="left:1427px;top:6px;width:0;height:0;border-left:4px solid transparent;border-right:4px solid transparent;border-bottom:5px solid #a3a3a3"></div>
<div class="a" style="left:1427.5px;top:745.5px;width:0;height:0;border-left:4px solid transparent;border-right:4px solid transparent;border-top:5px solid #505050"></div>
</body></html>
